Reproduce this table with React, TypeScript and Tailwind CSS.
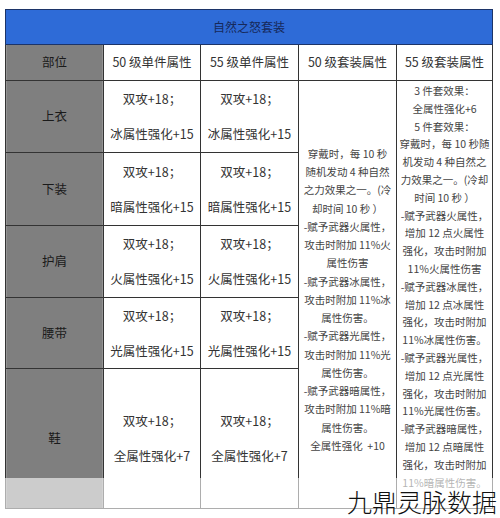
import React from "react";

const font = { fontFamily: '"Noto Sans CJK SC", "Noto Sans", sans-serif' };

const rows = [
  { part: "上衣", a: "冰属性强化+15" },
  { part: "下装", a: "暗属性强化+15" },
  { part: "护肩", a: "火属性强化+15" },
  { part: "腰带", a: "光属性强化+15" },
  { part: "鞋", a: "全属性强化+7" },
];

const col4 = [
  "穿戴时，每 10 秒",
  "随机发动 4 种自然",
  "之力效果之一。(冷",
  "却时间 10 秒 ）",
  "-赋予武器火属性，",
  "攻击时附加 11%火",
  "属性伤害",
  "-赋予武器冰属性，",
  "攻击时附加 11%冰",
  "属性伤害。",
  "-赋予武器光属性，",
  "攻击时附加 11%光",
  "属性伤害。",
  "-赋予武器暗属性，",
  "攻击时附加 11%暗",
  "属性伤害。",
  "全属性强化\u00a0\u00a0+10",
];

const col5 = [
  "3 件套效果：",
  "全属性强化+6",
  "5 件套效果：",
  "穿戴时，每 10 秒随",
  "机发动 4 种自然之",
  "力效果之一。(冷却",
  "时间 10 秒 ）",
  "-赋予武器火属性，",
  "增加 12 点火属性",
  "强化，攻击时附加",
  "11%火属性伤害",
  "-赋予武器冰属性，",
  "增加 12 点冰属性",
  "强化，攻击时附加",
  "11%冰属性伤害。",
  "-赋予武器光属性，",
  "增加 12 点光属性",
  "强化，攻击时附加",
  "11%光属性伤害。",
  "-赋予武器暗属性，",
  "增加 12 点暗属性",
  "强化，攻击时附加",
  "11%暗属性伤害。",
];

const grayCell =
  "bg-[#7f7f7f] flex items-center justify-center text-[12.5px] text-[#1a1a1a] shadow-[inset_1px_0_0_#939393,inset_-1px_0_0_#939393]";
const whiteHead =
  "bg-white flex items-center justify-center text-[12.5px] text-[#333]";

export default function App() {
  return (
    <div className="relative w-[500px] h-[518px] bg-white overflow-hidden" style={font}>
      <div className="pt-[9px] pl-[5px]">
        <div className="w-[488px] h-[36px] border border-[#1c3468] bg-[#2e6bd7] flex items-center justify-center text-[12px] text-[#16295a]">
          自然之怒套装
        </div>
        <div className="w-[488px] grid grid-cols-[97px_96px_97px_97px_95px] grid-rows-[35px_71px_72px_71px_70px_139px] gap-px bg-[#333] border-x border-b border-[#333]">
          <div className={grayCell}>部位</div>
          <div className={whiteHead}>50 级单件属性</div>
          <div className={whiteHead}>55 级单件属性</div>
          <div className={whiteHead}>50 级套装属性</div>
          <div className={whiteHead}>55 级套装属性</div>

          {rows.map((r, i) => (
            <React.Fragment key={r.part}>
              <div className={grayCell} style={{ gridColumn: 1, gridRow: i + 2 }}>
                {r.part}
              </div>
              {[2, 3].map((c) => (
                <div
                  key={c}
                  className="bg-white flex flex-col items-center justify-center gap-[17.5px] text-[12.5px] leading-[17.5px] text-[#333]"
                  style={{ gridColumn: c, gridRow: i + 2 }}
                >
                  <div>双攻+18；</div>
                  <div>{r.a}</div>
                </div>
              ))}
            </React.Fragment>
          ))}

          <div
            className="bg-white flex flex-col items-center justify-center pt-[11px] text-[10.5px] leading-[18.25px] text-[#444] whitespace-nowrap"
            style={{ gridColumn: 4, gridRow: "2 / span 5" }}
          >
            {col4.map((t, i) => (
              <div key={i}>{t}</div>
            ))}
          </div>
          <div
            className="bg-white flex flex-col items-center pt-[1px] text-[10.5px] leading-[17.8px] text-[#444] whitespace-nowrap overflow-hidden"
            style={{ gridColumn: 5, gridRow: "2 / span 5" }}
          >
            {col5.map((t, i) => (
              <div key={i}>{t}</div>
            ))}
          </div>
        </div>
      </div>

      <div className="absolute left-[4px] top-[478px] w-[490px] h-[32px] bg-white/60" />

      <div className="absolute right-[3px] top-[486px] text-[25px] leading-[30px] font-light text-[#111]">
        九鼎灵脉数据
      </div>
    </div>
  );
}
